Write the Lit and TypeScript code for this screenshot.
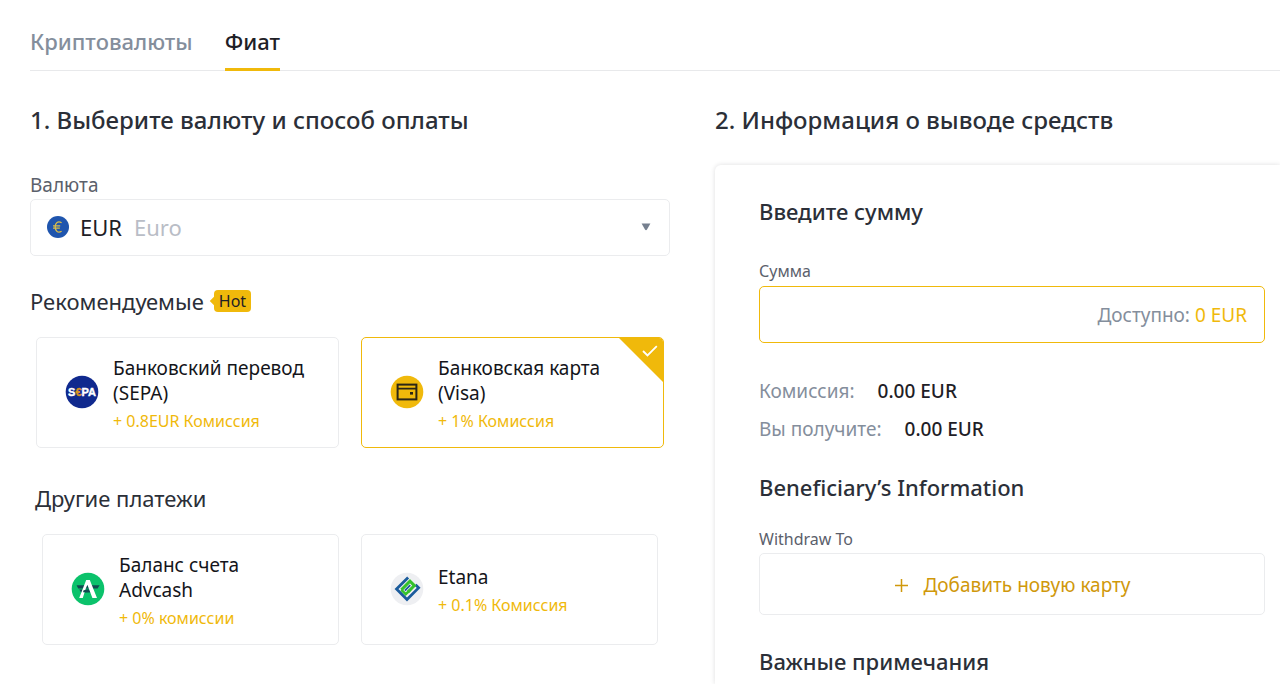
import { LitElement, html, css, nothing, TemplateResult } from "lit";
import { customElement, property, state } from "lit/decorators.js";
import { classMap } from "lit/directives/class-map.js";

interface Method {
  id: string;
  name: string;
  fee: string;
  icon: TemplateResult;
}

const sepaIcon = html`<svg width="34" height="34" viewBox="0 0 34 34" aria-hidden="true">
  <circle cx="17" cy="17" r="16.3" fill="#10298e" />
  <text x="17" y="21" text-anchor="middle" font-family="Liberation Sans, Arial, sans-serif" font-size="11" font-weight="700" fill="#fff" stroke="#fff" stroke-width="0.4">S<tspan fill="#d8921e" stroke="#d8921e">€</tspan>PA</text>
</svg>`;

const cardIcon = html`<svg width="34" height="34" viewBox="0 0 34 34" aria-hidden="true">
  <circle cx="17" cy="17" r="16.3" fill="#f0b90b" />
  <rect x="7.6" y="9.6" width="18.8" height="14.8" fill="none" stroke="#2b2616" stroke-width="2" />
  <path d="M7.5 13.6H26.5" stroke="#2b2616" stroke-width="1.8" />
  <rect x="20" y="17" width="3" height="2.6" fill="#2b2616" />
</svg>`;

const advcashIcon = html`<svg width="34" height="34" viewBox="0 0 34 34" aria-hidden="true">
  <circle cx="17" cy="17" r="16.3" fill="#0bc26b" />
  <path d="M5.6 13.2H28.6L26.6 16.4H7.2Z" fill="#114a50" />
  <path d="M8.2 17.4H20L21 20.4H10.2Z" fill="#114a50" />
  <path d="M15.2 8H18.8L26 26H21.4L16.4 12.8L14.6 17L11.8 26H8.2Z" fill="#fff" />
  <path d="M12.6 18.2L17.6 17.6L18.4 20L12 20.2Z" fill="#114a50" />
</svg>`;

const etanaIcon = html`<svg width="34" height="34" viewBox="0 0 34 34" aria-hidden="true">
  <circle cx="17" cy="17" r="16.3" fill="#eeeff2" />
  <g transform="translate(17 17) rotate(-45)" fill="none">
    <path d="M9 -7.4H-7.4V7.4H9V3" stroke="#1b5b9c" stroke-width="2.8" />
    <path d="M-4.6 -3.4H7.6V2.8H-1.6" stroke="#35c12c" stroke-width="3" />
    <path d="M-4.6 -3.4V2.8H2" stroke="#35c12c" stroke-width="2.6" />
    <path d="M-2.6 -0.4H5" stroke="#1b5b9c" stroke-width="1.8" />
  </g>
</svg>`;

const RECOMMENDED: Method[] = [
  { id: "sepa", name: "Банковский перевод (SEPA)", fee: "+ 0.8EUR Комиссия", icon: sepaIcon },
  { id: "visa", name: "Банковская карта (Visa)", fee: "+ 1% Комиссия", icon: cardIcon },
];

const OTHER: Method[] = [
  { id: "advcash", name: "Баланс счета Advcash", fee: "+ 0% комиссии", icon: advcashIcon },
  { id: "etana", name: "Etana", fee: "+ 0.1% Комиссия", icon: etanaIcon },
];

@customElement("payment-option")
class PaymentOption extends LitElement {
  @property({ attribute: false }) method!: Method;
  @property({ type: Boolean }) selected = false;

  static styles = css`
    :host {
      display: grid;
    }
    .option {
      position: relative;
      display: flex;
      align-items: center;
      gap: 14px;
      box-sizing: border-box;
      min-height: 111px;
      padding: 7px 28px 9px;
      border: 1px solid #ebecee;
      border-radius: 5px;
      overflow: hidden;
      cursor: pointer;
    }
    .option.selected {
      border-color: #f0b90b;
    }
    .radio {
      position: absolute;
      inset: 0;
      margin: 0;
      opacity: 0;
      cursor: pointer;
    }
    .icon {
      display: flex;
      flex: none;
    }
    .text {
      display: flex;
      flex-direction: column;
      gap: 3px;
      min-width: 0;
      padding-top: 5px;
    }
    .name {
      color: #14151a;
      font-size: 19px;
      line-height: 25px;
    }
    .fee {
      color: #f0b90b;
      font-size: 16px;
      line-height: 24px;
    }
    .mark {
      position: absolute;
      top: -1px;
      right: -1px;
    }
  `;

  private pick() {
    this.dispatchEvent(new CustomEvent("pick", { detail: this.method.id }));
  }

  render() {
    const m = this.method;
    return html`<label class=${classMap({ option: true, selected: this.selected })}>
      <input class="radio" type="radio" name="method" .checked=${this.selected} @change=${this.pick} />
      <span class="icon">${m.icon}</span>
      <span class="text">
        <span class="name">${m.name}</span>
        <span class="fee">${m.fee}</span>
      </span>
      ${this.selected
        ? html`<svg class="mark" width="46" height="46" viewBox="0 0 46 46" aria-hidden="true">
            <path d="M0 0H46V46Z" fill="#f0b90b" />
            <path d="M25 14L29.5 18.5L38.8 9.2" fill="none" stroke="#fff" stroke-width="1.8" />
          </svg>`
        : nothing}
    </label>`;
  }
}

@customElement("app-root")
class AppRoot extends LitElement {
  @state() private tab = "fiat";
  @state() private method = "visa";

  static styles = css`
    :host {
      display: flex;
      flex-direction: column;
      box-sizing: border-box;
      min-height: 100vh;
      padding: 26px 0 0 30px;
      background: #fff;
      color: #2b2f38;
      font-family: "Noto Sans", sans-serif;
    }
    h2,
    h3,
    dl,
    dd {
      margin: 0;
    }
    button,
    input,
    select {
      font: inherit;
    }
    .tabs {
      display: flex;
      gap: 32px;
      border-bottom: 1px solid #e8e9eb;
    }
    .tab {
      margin-bottom: -1px;
      padding: 0 0 12px;
      border: 0;
      border-bottom: 3px solid transparent;
      background: none;
      color: #848e9c;
      font-size: 22px;
      font-weight: 500;
      line-height: 30px;
      cursor: pointer;
    }
    .tab.active {
      border-color: #f0b90b;
      color: #1e2026;
    }
    .columns {
      display: grid;
      flex: 1;
      grid-template-columns: 640fr 565fr;
      gap: 45px;
      padding-top: 33px;
    }
    .column {
      display: flex;
      flex-direction: column;
      min-width: 0;
    }
    .title {
      font-size: 24px;
      font-weight: 500;
      line-height: 32px;
    }
    .field-label {
      display: block;
      color: #5b606b;
      font-size: 16px;
      line-height: 20px;
    }
    .field-label.large {
      margin: 37px 0 2px;
      font-size: 19px;
      line-height: 24px;
    }
    .currency {
      display: flex;
      align-items: center;
      box-sizing: border-box;
      height: 57px;
      padding: 0 18px 2px 16px;
      border: 1px solid #ebecee;
      border-radius: 5px;
      font-size: 22px;
      line-height: 30px;
    }
    .currency-icon {
      flex: none;
      margin-right: 11px;
    }
    .currency-select {
      appearance: none;
      margin: 0;
      padding: 0;
      border: 0;
      background: none;
      color: #1e2026;
      field-sizing: content;
      cursor: pointer;
    }
    .currency-name {
      flex: 1;
      margin-left: 12px;
      color: #b9bdc6;
    }
    .group-title {
      display: flex;
      align-items: center;
      gap: 10px;
      font-size: 22px;
      font-weight: 400;
      line-height: 28px;
    }
    .hot {
      position: relative;
      padding: 0 5px;
      border-radius: 4px;
      background: #f0b90b;
      color: #1e2026;
      font-size: 16px;
      line-height: 22px;
    }
    .hot::before {
      content: "";
      position: absolute;
      left: -3px;
      top: 8px;
      width: 6px;
      height: 6px;
      background: #f0b90b;
      transform: rotate(45deg);
    }
    .group {
      margin-top: 31px;
    }
    .group.other {
      margin-top: 36px;
    }
    .group.other .group-title {
      padding-left: 5px;
    }
    .options {
      display: grid;
      grid-template-columns: 1fr 1fr;
      gap: 22px;
      margin-top: 22px;
      padding: 0 6px;
    }
    .group.other .options {
      padding: 0 12px;
    }
    .panel {
      flex: 1;
      margin-top: 29px;
      padding: 32px 15px 8px 44px;
      border-radius: 6px 0 0 0;
      box-shadow: 0 0 5px rgba(20, 21, 26, 0.14);
    }
    .panel-title {
      font-size: 22px;
      font-weight: 500;
      line-height: 28px;
    }
    .amount-label {
      margin: 36px 0 5px;
    }
    .amount {
      display: flex;
      align-items: center;
      box-sizing: border-box;
      height: 57px;
      padding: 0 17px;
      border: 1px solid #f0b90b;
      border-radius: 5px;
      color: #848e9c;
      font-size: 19px;
      line-height: 24px;
    }
    .amount-input {
      flex: 1;
      min-width: 0;
      padding: 0;
      border: 0;
      outline: 0;
      background: none;
      color: #1e2026;
    }
    .available {
      color: #f0b90b;
    }
    .totals {
      display: flex;
      flex-direction: column;
      gap: 14px;
      margin: 36px 0 32px;
      font-size: 19px;
      line-height: 24px;
    }
    .total {
      display: flex;
      gap: 23px;
    }
    .total-name {
      color: #848e9c;
    }
    .total-value {
      color: #1e2026;
      font-weight: 500;
    }
    .withdraw-label {
      margin: 28px 0 4px;
    }
    .add-card {
      display: flex;
      align-items: center;
      justify-content: center;
      gap: 15px;
      box-sizing: border-box;
      width: 100%;
      height: 62px;
      margin-bottom: 32px;
      padding: 2px 0 0 2px;
      border: 1px solid #ebecee;
      border-radius: 5px;
      background: none;
      color: #d0980b;
      font-size: 19px;
      line-height: 24px;
      cursor: pointer;
    }
  `;

  private tabButton(id: string, text: string) {
    const active = this.tab === id;
    return html`<button
      class=${classMap({ tab: true, active })}
      role="tab"
      aria-selected=${active ? "true" : "false"}
      @click=${() => (this.tab = id)}
    >${text}</button>`;
  }

  private methodList(methods: Method[]) {
    return html`<div class="options">
      ${methods.map(
        (m) => html`<payment-option
          .method=${m}
          ?selected=${this.method === m.id}
          @pick=${(e: CustomEvent<string>) => (this.method = e.detail)}
        ></payment-option>`
      )}
    </div>`;
  }

  render() {
    return html`
      <nav class="tabs" role="tablist">
        ${this.tabButton("crypto", "Криптовалюты")} ${this.tabButton("fiat", "Фиат")}
      </nav>
      <main class="columns">
        <section class="column">
          <h2 class="title">1. Выберите валюту и способ оплаты</h2>
          <label class="field-label large" for="currency">Валюта</label>
          <div class="currency">
            <svg class="currency-icon" width="22" height="22" viewBox="0 0 22 22" aria-hidden="true">
              <circle cx="11" cy="11" r="11" fill="#1f55ae" />
              <path d="M14.6 6.8C11 4.6 8.2 7 8.2 11S11 17.4 14.6 15.2M6 9.8H13.2M6 12.2H12.8" fill="none" stroke="#d9bd4a" stroke-width="1.3" />
            </svg>
            <select class="currency-select" id="currency">
              <option>EUR</option>
            </select>
            <span class="currency-name">Euro</span>
            <svg width="10" height="8" viewBox="0 0 10 8" aria-hidden="true">
              <path d="M0.6 0.6H9.4L6 6.6Q5 7.8 4 6.6Z" fill="#76808f" />
            </svg>
          </div>
          <div class="group">
            <h3 class="group-title">Рекомендуемые <span class="hot">Hot</span></h3>
            ${this.methodList(RECOMMENDED)}
          </div>
          <div class="group other">
            <h3 class="group-title">Другие платежи</h3>
            ${this.methodList(OTHER)}
          </div>
        </section>
        <section class="column">
          <h2 class="title">2. Информация о выводе средств</h2>
          <div class="panel">
            <h3 class="panel-title">Введите сумму</h3>
            <label class="field-label amount-label" for="amount">Сумма</label>
            <div class="amount">
              <input class="amount-input" id="amount" type="text" inputmode="decimal" />
              <span>Доступно: <span class="available">0 EUR</span></span>
            </div>
            <dl class="totals">
              <div class="total">
                <dt class="total-name">Комиссия:</dt>
                <dd class="total-value">0.00 EUR</dd>
              </div>
              <div class="total">
                <dt class="total-name">Вы получите:</dt>
                <dd class="total-value">0.00 EUR</dd>
              </div>
            </dl>
            <h3 class="panel-title">Beneficiary’s Information</h3>
            <label class="field-label withdraw-label" for="add-card">Withdraw To</label>
            <button class="add-card" id="add-card" type="button">
              <svg width="13" height="13" viewBox="0 0 13 13" aria-hidden="true">
                <path d="M6.5 0V13M0 6.5H13" stroke="currentColor" stroke-width="1.5" />
              </svg>
              Добавить новую карту
            </button>
            <h3 class="panel-title">Важные примечания</h3>
          </div>
        </section>
      </main>
    `;
  }
}
